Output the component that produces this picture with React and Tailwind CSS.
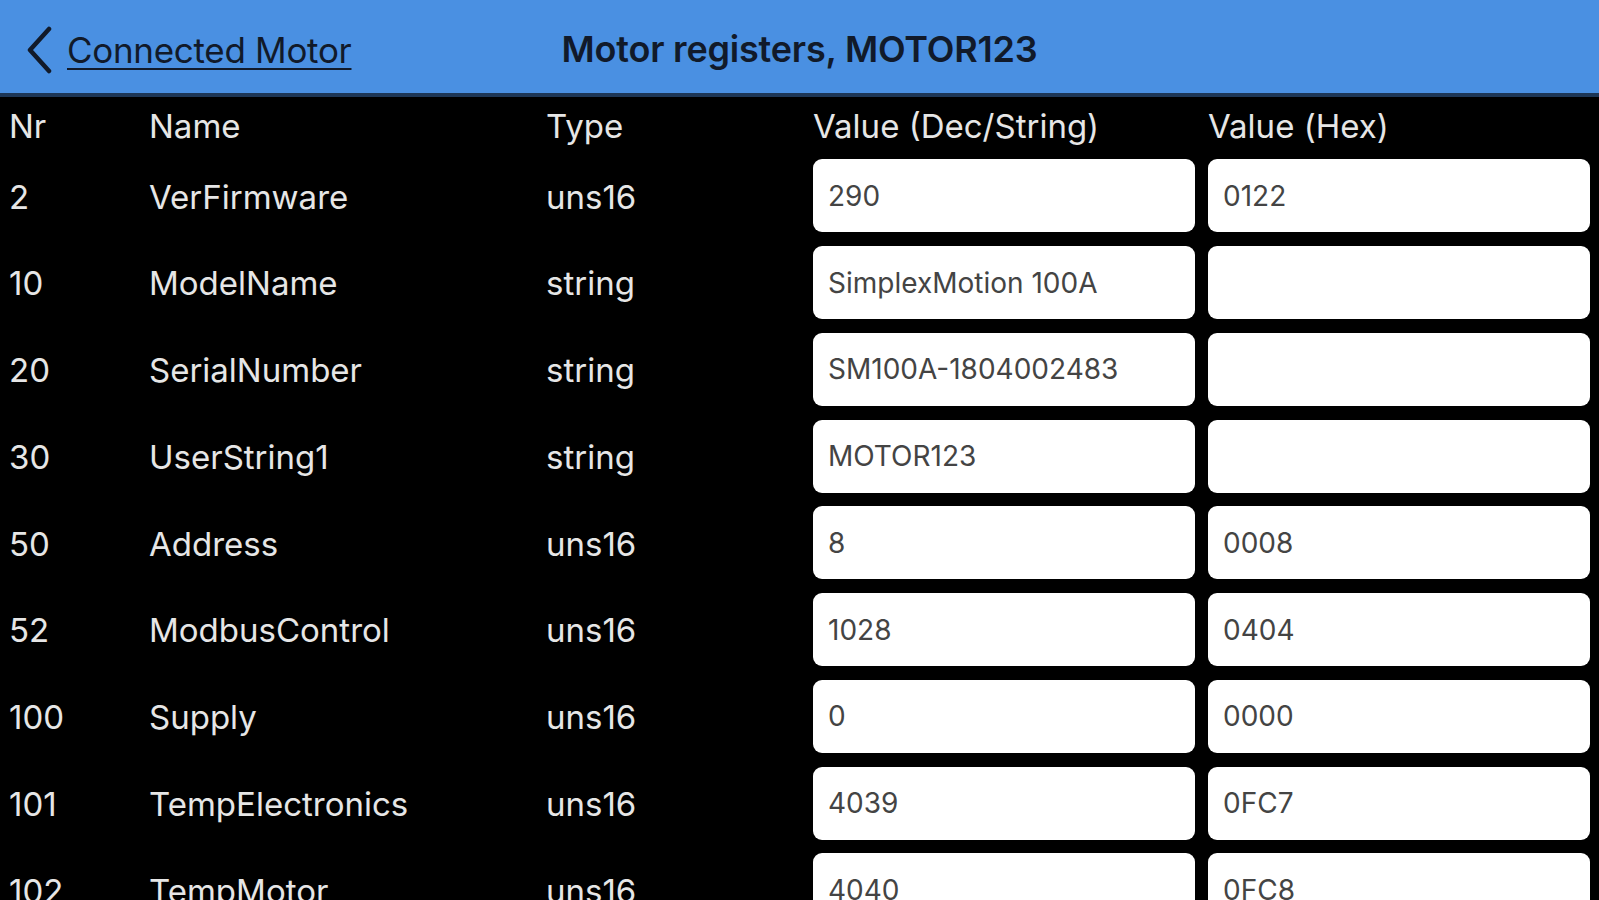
import { useState } from 'react';

const rows = [
  { nr: 2, name: 'VerFirmware', type: 'uns16', dec: '290', hex: '0122' },
  { nr: 10, name: 'ModelName', type: 'string', dec: 'SimplexMotion 100A', hex: '' },
  { nr: 20, name: 'SerialNumber', type: 'string', dec: 'SM100A-1804002483', hex: '' },
  { nr: 30, name: 'UserString1', type: 'string', dec: 'MOTOR123', hex: '' },
  { nr: 50, name: 'Address', type: 'uns16', dec: '8', hex: '0008' },
  { nr: 52, name: 'ModbusControl', type: 'uns16', dec: '1028', hex: '0404' },
  { nr: 100, name: 'Supply', type: 'uns16', dec: '0', hex: '0000' },
  { nr: 101, name: 'TempElectronics', type: 'uns16', dec: '4039', hex: '0FC7' },
  { nr: 102, name: 'TempMotor', type: 'uns16', dec: '4040', hex: '0FC8' },
  { nr: 103, name: 'Voltage', type: 'uns16', dec: '0', hex: '0000' },
];

function ValueBox({ value, onChange }) {
  return (
    <input
      type="text"
      value={value}
      onChange={(e) => onChange(e.target.value)}
      className="w-[382px] h-[73px] bg-white rounded-[9px] pl-[15px] text-[28px] text-[#444] outline-none"
    />
  );
}

export default function App() {
  const [values, setValues] = useState(rows);

  const update = (i, key, v) =>
    setValues((list) => list.map((r, j) => (j === i ? { ...r, [key]: v } : r)));

  return (
    <div className="h-screen overflow-hidden bg-black font-['Inter',sans-serif]">
      <div className="relative h-[97px] bg-[#4a90e2] border-b-[4px] border-[#1d3656] flex items-center justify-center">
        <a href="#" className="absolute left-[25px] top-[24px] flex items-center text-[#111a2a]">
          <svg width="30" height="48" viewBox="0 0 30 48" fill="none" stroke="currentColor" strokeWidth="4.5" strokeLinecap="round" strokeLinejoin="round">
            <polyline points="24,3 5,24 24,45" />
          </svg>
          <span className="ml-[12px] text-[35px] tracking-[-0.3px] underline underline-offset-[5px] decoration-[2px]">Connected Motor</span>
        </a>
        <h1 className="text-[36px] font-semibold tracking-[-0.2px] text-[#111a2a] mt-[4px]">Motor registers, MOTOR123</h1>
      </div>

      <div className="px-[9px] pt-[3px] text-[#e6e6e6] text-[33px]">
        <div className="flex items-center h-[54px]">
          <div className="w-[140px]">Nr</div>
          <div className="w-[397px]">Name</div>
          <div className="w-[267px]">Type</div>
          <div className="w-[395px]">Value (Dec/String)</div>
          <div>Value (Hex)</div>
        </div>
        {values.map((r, i) => (
          <div key={r.nr} className="flex items-center h-[86.75px]">
            <div className="w-[140px]">{r.nr}</div>
            <div className="w-[397px]">{r.name}</div>
            <div className="w-[267px]">{r.type}</div>
            <div className="flex gap-[13px] -mt-[3px]">
              <ValueBox value={r.dec} onChange={(v) => update(i, 'dec', v)} />
              <ValueBox value={r.hex} onChange={(v) => update(i, 'hex', v)} />
            </div>
          </div>
        ))}
      </div>
    </div>
  );
}
